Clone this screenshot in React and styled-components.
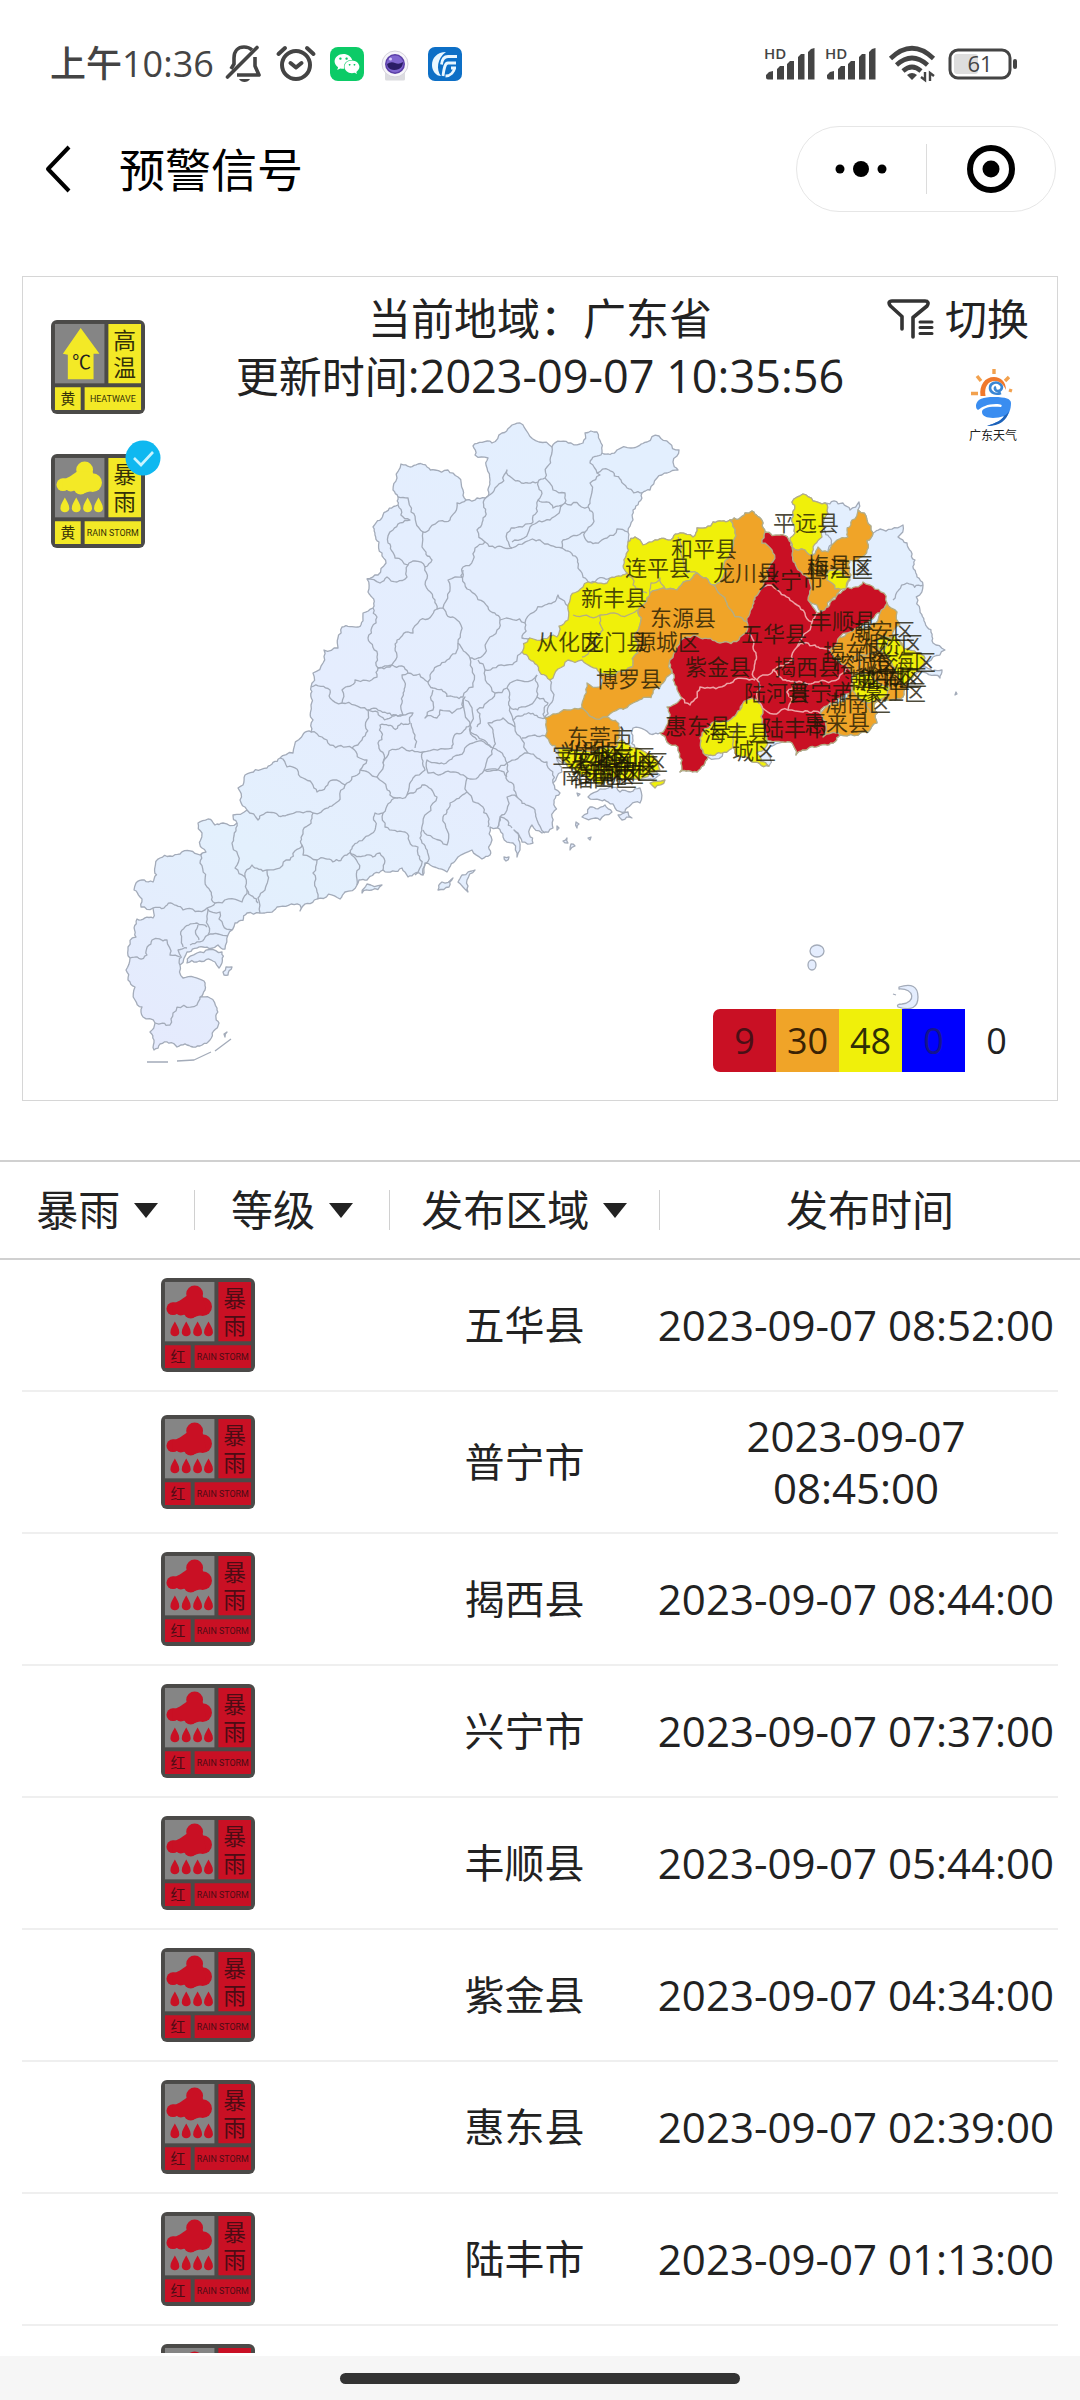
import React from "react";
import styled, { createGlobalStyle } from "styled-components";
import { FaWeixin } from "react-icons/fa";

const GlobalStyle = createGlobalStyle`
  * {
    box-sizing: border-box;
  }

  body {
    margin: 0;
    background: #fff;
    color: #222;
    font-family: "Open Sans", "Noto Sans CJK SC", sans-serif;
  }
`;

const RED = "#c91024";
const ORANGE = "#f0a428";
const YELLOW = "#f0f00a";
const SIGN_YELLOW = "#f3e926";

/* ---------- layout ---------- */

const Page = styled.div`
  display: flex;
  flex-direction: column;
  height: 100vh;
  overflow: hidden;
`;

const StatusBar = styled.header`
  display: flex;
  align-items: center;
  justify-content: space-between;
  flex: none;
  height: 86px;
  padding: 42px 62px 0 50px;
  color: #444;
`;

const StatusGroup = styled.div`
  display: flex;
  align-items: center;
  gap: ${props => props.$gap}px;

  svg {
    display: block;
    overflow: visible;
  }
`;

const Clock = styled.span`
  font-size: 36px;
  font-weight: 500;
  line-height: 44px;
`;

const WechatTile = styled.span`
  display: flex;
  align-items: center;
  justify-content: center;
  width: 34px;
  height: 34px;
  border-radius: 8px;
  background: #0ccb67;
  color: #fff;
  font-size: 26px;
`;

const NavBar = styled.nav`
  display: flex;
  align-items: center;
  flex: none;
  height: 166px;
  padding: 0 24px 0 34px;
  color: #000;

  h1 {
    flex: 1;
    margin: 0 0 0 37px;
    font-size: 46px;
    font-weight: 400;
    line-height: 60px;
  }
`;

const PlainButton = styled.button`
  display: flex;
  align-items: center;
  justify-content: center;
  padding: 0;
  border: 0;
  background: none;
  color: inherit;
  font: inherit;
`;

const BackButton = styled(PlainButton)`
  width: 48px;
  height: 60px;
`;

const Capsule = styled.div`
  display: flex;
  align-items: center;
  width: 260px;
  height: 86px;
  border: 1px solid #e6e6e6;
  border-radius: 43px;

  button {
    flex: 1;
    height: 50px;
  }

  button + button {
    border-left: 1px solid #dcdcdc;
  }
`;

const MapCard = styled.section`
  display: grid;
  flex: none;
  margin: 24px 22px 59px;
  border: 1px solid #d6d6d6;

  > * {
    grid-area: 1 / 1;
  }
`;

const MapSvg = styled.svg`
  display: block;
  width: 100%;

  text {
    fill: #1c1804;
    fill-opacity: 0.78;
    font-size: 22px;
    text-anchor: middle;
  }
`;

const MapOverlay = styled.div`
  display: flex;
  flex-direction: column;
  justify-content: space-between;
  z-index: 1;
`;

const MapTop = styled.div`
  display: grid;
  grid-template-columns: 1fr auto 1fr;
`;

const SignList = styled.div`
  display: flex;
  flex-direction: column;
  align-items: flex-start;
  gap: 40px;
  padding: 43px 0 0 28px;
`;

const SignButton = styled(PlainButton)`
  position: relative;
`;

const Tick = styled.svg`
  position: absolute;
  top: -14px;
  right: -16px;
`;

const MapTitle = styled.div`
  padding-top: 13px;
  font-size: 43px;
  line-height: 57px;
  text-align: center;

  p {
    margin: 0;
  }

  time {
    font-size: 45px;
  }
`;

const MapTools = styled.div`
  display: flex;
  flex-direction: column;
  align-items: flex-end;
  padding: 13px 28px 0 0;
`;

const SwitchButton = styled(PlainButton)`
  gap: 11px;
  font-size: 42px;
  line-height: 57px;
`;

const Brand = styled.div`
  display: flex;
  flex-direction: column;
  align-items: center;
  margin: 22px 12px 0 0;
  font-size: 12px;
  line-height: 18px;
`;

const Legend = styled.ul`
  display: flex;
  align-self: flex-end;
  margin: 0 29px 28px 0;
  padding: 0;
  list-style: none;
  font-size: 36px;
  line-height: 63px;
  text-align: center;
`;

const LegendCell = styled.li`
  width: 63px;
  background: ${props => props.$color};
  color: ${props => props.$ink || "#222"};

  &:first-child {
    border-radius: 7px 0 0 7px;
  }
`;

const FilterBar = styled.div`
  display: grid;
  grid-template-columns: 18fr 18fr 25fr 39fr;
  align-items: center;
  flex: none;
  height: 100px;
  border-top: 2px solid #d0d0d0;
  border-bottom: 2px solid #d0d0d0;
  font-size: 42px;
`;

const FilterCell = styled.div`
  display: flex;
  align-items: center;
  justify-content: center;
  gap: 13px;
  height: 40px;
  line-height: 60px;

  & + & {
    border-left: 1px solid #d0d0d0;
  }
`;

const FilterSelect = styled.select`
  appearance: none;
  margin: 0;
  padding: 0;
  border: 0;
  background: none;
  color: inherit;
  font: inherit;
`;

const List = styled.main`
  flex: 1;
  min-height: 0;
  overflow: hidden;
  padding: 0 22px;
`;

const WarningTable = styled.table`
  width: 100%;
  table-layout: fixed;
  border-collapse: collapse;
  font-size: 40px;
  line-height: 52px;
  text-align: center;

  td {
    padding: 18px 0;
    border-bottom: 2px solid #efefef;
    white-space: nowrap;
  }

  svg {
    display: block;
    margin: 0 auto;
  }
`;

const Col = styled.col`
  width: ${props => props.$width};
`;

const IssueTime = styled.time`
  display: block;
  font-size: 42px;

  span {
    display: ${props => (props.$stacked ? "block" : "inline")};
  }
`;

const HomeBar = styled.footer`
  display: flex;
  justify-content: center;
  flex: none;
  height: 47px;
  padding-top: 17px;
  border-top: 3px solid #fff;
  background: #f6f6f6;

  span {
    width: 37%;
    height: 11px;
    border-radius: 6px;
    background: #333;
  }
`;

/* ---------- icons ---------- */

const MuteIcon = () => (
  <svg width="36" height="38" viewBox="0 0 36 38" fill="none" stroke="currentColor" strokeWidth="3.6">
    <path d="M5 24 8 19V13C8 6 12 2 18 2c3 0 6 1 8 3" />
    <path d="M29 12v9l4 9H11" strokeLinejoin="round" />
    <path d="M1.500 32 31 2.500" strokeLinecap="round" />
    <path d="M13 34h11c-2 4-9 4-11 0z" fill="currentColor" stroke="none" />
  </svg>
);

const AlarmIcon = () => (
  <svg width="40" height="38" viewBox="0 0 40 38" fill="none" stroke="currentColor" strokeWidth="4" strokeLinecap="round">
    <circle cx="20" cy="20" r="14" />
    <path d="M2.500 9 9 3M31 3l6.500 6M14.500 18l5.500 4.500 5.500-4.500" strokeLinejoin="round" />
  </svg>
);

const CameraIcon = () => (
  <svg width="34" height="34" viewBox="0 0 34 34">
    <path d="M7 22h20v10a1.500 1.500 0 0 1-1.500 1.500h-17A1.500 1.500 0 0 1 7 32z" fill="#dcdce0" />
    <circle cx="17" cy="17" r="13" fill="#f6f5f9" stroke="#d6d3dc" />
    <circle cx="17" cy="17" r="10" fill="#5a3ea6" />
    <circle cx="17" cy="17" r="8.500" fill="#8066cf" />
    <path d="M9 17q4-3 8-1t8-1q0 5-4 7-5 2-9 0-3-2-3-5z" fill="#2b1d66" />
    <circle cx="12.500" cy="12" r="1.500" fill="#d9ccff" />
  </svg>
);

const BankIcon = () => (
  <svg width="34" height="34" viewBox="0 0 34 34">
    <rect width="34" height="34" rx="7" fill="#0d6fc6" />
    <g fill="none" stroke="#e9f7ff">
      <path d="M18 5C9 5 4 11 4 18c0 6 4 11 9 11-5-6-4-18 5-24z" fill="#e9f7ff" stroke="none" />
      <path d="M29 9.500H20c-4 0-6 3-6.500 8M28 16h-8c-3 0-4 5-5 13M23 21h5M26.500 20c0 5-4 9-9 9" strokeWidth="2.800" />
    </g>
  </svg>
);

const SignalIcon = () => (
  <svg width="51" height="34" viewBox="0 0 51 34" fill="currentColor">
    <text x="0" y="12" fontSize="15" fontWeight="600">HD</text>
    <path d="M2 28l3-3 4-1v8.500H4a2 2 0 0 1-2-2zM13 22l3-3h4v13.500h-7zM23 17l3-3h4v18.500h-7zM34 10l3-3h3.500v25.500H34zM44 5l3-3 3.500-1v31.500H44z" />
  </svg>
);

const WifiIcon = () => (
  <svg width="46" height="36" viewBox="0 0 46 36" fill="none" stroke="currentColor" strokeWidth="4.600">
    <path d="M1.500 12.500Q23-8 44.500 12.500M7.500 19Q23 5 38.500 19M14 25Q23 17 32 25" />
    <path d="M18 29q5-4 10 0l-5 5z" fill="currentColor" stroke="none" />
    <path d="M36 26v8l-4-3M41 35v-8l4 3" strokeWidth="2.400" />
  </svg>
);

const BatteryIcon = () => (
  <svg width="70" height="32" viewBox="0 0 70 32">
    <rect x="6" y="6" width="24" height="20" rx="3" fill="#dedede" />
    <rect x="2" y="2" width="60" height="28" rx="8" fill="none" stroke="currentColor" strokeWidth="3" />
    <rect x="65" y="11" width="4" height="10" rx="2" fill="currentColor" />
    <text x="32" y="24" fontSize="22" fontWeight="500" textAnchor="middle" fill="currentColor">61</text>
  </svg>
);

const FilterIcon = () => (
  <svg width="47" height="40" viewBox="0 0 47 40" fill="none" stroke="#333" strokeWidth="3.600" strokeLinecap="round" strokeLinejoin="round">
    <path d="M15 30V17.500L3.500 7C1 4 2 2 5 2h33c3 0 4 2 2 5L26 18.500V38" />
    <path d="M33 23h12M33 28.500h12M33 34.500h12" strokeWidth="3" />
  </svg>
);

const Caret = () => (
  <svg width="24" height="15" viewBox="0 0 24 15" aria-hidden="true">
    <path d="M0 0h24L12 15z" fill="#222" />
  </svg>
);

const BrandLogo = () => (
  <svg width="44" height="58" viewBox="0 0 44 58" fill="none">
    <path d="M9.500 27C8 16 14 8 23 8c7 0 12 5 12 13-2-5-6-9-11-9-7 0-11 6-9.500 15z" fill="#f0792c" />
    <path d="M0 24.500h7M6 7l4 5M23 0v5M38 8l-4 4M38 21l3 1" stroke="#f2a14e" strokeWidth="3.400" />
    <path d="M30 24c-5 2-11 0-11-5s6-7 10-4 1 7-2 7-4-3-2-4" stroke="#3a86d4" strokeWidth="2.600" />
    <path d="M5 36c1-6 7-8 18-8 12 0 17 2 17 6 0 12-8 22-24 23 9-3 15-6 17-10-8 3-22 3-22-4 0-4 7-6 19-5 2-2 0-3-5-3-9 0-14 3-18 6-2-1-2-3-2-5z" fill="#3a8df0" />
    <path d="M16 57c9-3 15-6 17-10 2-1 4-3 5-5-2 9-9 15-22 15z" fill="#1e62b8" />
  </svg>
);

const StormPicture = ({ color }) => (
  <g fill={color}>
    <circle cx="34" cy="16" r="8.500" />
    <circle cx="12" cy="31" r="6.500" />
    <circle cx="20" cy="32" r="6" />
    <circle cx="30" cy="34" r="7" />
    <circle cx="42" cy="29" r="9.500" />
    <path d="M12 25c5 0 8-3 14-7h16l4 18-14 4-12-4-8 1z" />
    {[14, 25.5, 37, 48].map(x => (
      <path key={x} d={`M${x} 44c2 4 4.500 7 4.500 11 0 5-9 5-9 0 0-4 2.500-7 4.500-11z`} />
    ))}
  </g>
);

const HeatPicture = ({ color }) => (
  <g>
    <path d="M30 8 49 34h-6v26H17V35l-5-1z" fill={color} />
    <text x="31" y="50" fontSize="19" textAnchor="middle" fill="#222">℃</text>
  </g>
);

const WarningSign = ({ kind, color, level, ink, english }) => (
  <svg width="94" height="94" viewBox="0 0 95 95" role="img" aria-label={`${kind}${level}`}>
    <rect width="95" height="95" rx="6" fill="#4b4a48" />
    <rect x="4" y="4" width="50" height="60" fill="#858585" />
    <path d="M58 4h33v60H58zM4 68h26v23H4zM34 68h57v23H34z" fill={color} />
    {kind === "高温" ? <HeatPicture color={color} /> : <StormPicture color={color} />}
    <g fill={ink} textAnchor="middle" fontSize="23">
      <text x="74.500" y="29">{kind[0]}</text>
      <text x="74.500" y="57">{kind[1]}</text>
      <text x="17" y="85" fontSize="15">{level}</text>
      <text x="62.500" y="83" fontSize="9" fontFamily="Roboto, sans-serif">
        {english}
      </text>
    </g>
  </svg>
);

/* ---------- map ---------- */

const OUTLINE =
  "520,423 510,427 502,433 492,443 473,446 475,455 488,458 487,468 490,480 488,496 477,498 466,500 463,490 458,477 448,470 435,470 427,467 418,464 410,467 401,464 397,478 393,490 398,497 398,505 383,515 373,527 375,535 379,542 382,553 386,563 378,575 367,579 368,592 373,608 363,613 358,627 342,627 338,638 338,648 324,650 323,663 313,673 311,687 311,705 313,720 311,732 293,753 280,758 267,768 245,775 243,785 238,788 240,800 247,810 233,815 237,823 223,823 215,825 208,819 198,823 202,833 202,848 206,852 200,855 180,854 160,858 155,867 153,882 136,883 134,890 140,897 141,907 153,908 153,918 137,919 136,937 128,947 130,958 126,970 128,980 135,987 135,1000 142,1007 143,1017 155,1023 150,1032 154,1040 154,1050 160,1044 177,1047 193,1047 210,1040 219,1023 217,1008 210,998 200,997 205,990 204,981 183,978 180,965 187,952 203,947 218,945 225,949 228,935 235,923 247,913 260,913 277,907 300,905 300,911 317,899 340,899 345,892 357,885 359,880 367,880 383,870 402,868 408,877 423,875 425,863 447,872 458,857 472,850 482,859 490,855 492,840 490,827 497,828 500,817 503,837 513,843 517,857 520,850 514,830 518,833 522,842 533,843 532,825 542,833 553,828 552,817 554,800 560,793 553,783 562,772 557,757 565,762 580,775 600,785 640,780 660,775 655,758 635,748 633,728 645,730 660,733 667,742 678,747 682,760 680,772 697,772 708,757 733,747 750,760 769,766 767,750 783,742 792,743 796,755 810,747 827,745 840,735 868,732 877,723 875,703 887,700 903,697 907,677 917,673 940,678 942,670 923,667 933,657 945,650 933,643 927,627 920,610 923,585 917,577 915,560 907,543 898,537 903,525 880,529 873,533 867,520 858,510 859,502 850,510 843,503 825,503 803,494 792,502 793,517 795,533 792,547 780,535 765,532 763,523 752,511 745,513 730,520 713,522 697,528 693,537 680,533 673,538 655,540 643,545 635,537 628,542 628,532 633,520 633,510 642,493 650,490 657,478 678,470 673,462 679,450 669,443 659,436 647,442 631,448 617,450 602,453 601,443 597,432 585,433 583,443 571,443 552,447 539,442 528,433";

const BORDERS = [
  "488,496 495,488 507,470 512,478 528,483 538,482 545,478 547,467 552,447",
  "602,453 590,463 597,473 609,470 621,480 627,488 642,493",
  "597,473 600,475 590,483 592,492 588,507 565,503 565,493 553,490 545,478",
  "538,482 538,500 533,522 518,527 507,533 507,540 512,548 540,540 562,548 563,540 585,532 593,513 588,507",
  "538,500 553,508 565,503 550,520 530,527 512,542",
  "585,532 588,542 607,538 617,529 628,532",
  "562,548 577,558 582,573 595,582 610,578",
  "398,497 408,498 411,512 423,532 450,520 457,503 466,500",
  "398,505 410,520 393,530 388,543 395,558 408,565 415,561 425,567 432,560 422,547 423,532",
  "408,565 407,577 397,582 387,577 380,583 367,579",
  "425,567 428,590 435,600 437,609 420,620 413,633 397,640 397,657 390,667 378,668 377,657 368,638 377,617 373,608",
  "437,609 443,608 448,580 463,577 463,567 473,560 475,548 485,542 477,530 488,496",
  "485,542 495,548 512,548",
  "463,570 470,590 488,607 500,620 525,623 545,605 558,595 573,613",
  "525,623 522,638 530,638",
  "443,608 457,620 458,643 470,658 478,658 488,640 497,630 500,620",
  "458,643 447,660 430,675 428,682 433,688 463,697 473,687 470,658",
  "378,668 392,665 408,673 428,682",
  "378,668 377,677 355,680 342,690 342,703 367,710 403,715 402,703 405,687 402,675 408,673",
  "311,687 330,690 330,698 342,703",
  "478,660 485,670 487,683 495,693 507,688 510,683 537,675",
  "485,670 507,665 522,652",
  "368,710 367,720 362,740 352,748 330,745 322,737 311,732",
  "352,748 367,760 360,770 345,785 333,780 317,792 303,778 287,767 280,758",
  "345,785 340,797 313,813 287,815 258,820 247,810",
  "313,813 303,830 302,845 290,860 267,870 252,865 245,877 235,868 232,843 237,823",
  "302,845 303,855 317,860 347,855 357,843 375,830 375,813 383,813 397,798 377,777 360,770",
  "317,860 313,873 318,898",
  "350,852 358,863 357,885",
  "350,852 380,853 383,870",
  "383,813 385,827 405,832 418,847 415,875",
  "397,798 407,795 422,785 437,797 423,823 422,843 423,875",
  "267,870 265,890 258,898 260,913",
  "245,877 247,890 242,902 215,903 207,887 200,863 202,853",
  "247,890 258,903",
  "153,908 183,910 207,908 215,903",
  "207,908 220,912 223,925 232,930",
  "208,910 208,935 190,945",
  "208,935 228,936",
  "198,925 199,940",
  "130,958 147,955 152,940 167,940 170,955 180,957",
  "183,947 182,930 197,923 207,927",
  "180,965 178,950 187,948",
  "155,1023 170,1025 173,1013 197,1005 200,997",
  "368,710 403,715 413,713 410,723 380,725 378,743 383,763 377,777",
  "383,763 402,747 423,752 425,770 413,778 407,795",
  "411,723 415,748",
  "423,752 470,725 465,700",
  "470,725 493,748 493,730 488,723 503,718 515,727 522,740 528,753 507,763 493,748",
  "528,753 547,762 553,783",
  "522,738 535,735 552,743",
  "515,727 513,720 545,718",
  "507,763 507,780 517,797 537,820 545,833",
  "517,797 507,797 507,810 500,817",
  "507,777 467,778 467,792 483,807 488,827",
  "467,778 428,773 427,760 437,763 453,757 473,743 493,748 484,770 507,763",
  "467,792 450,803 443,817 447,845 433,838 423,830",
  "477,727 477,710 495,693",
  "507,688 510,707 513,720",
  "510,707 537,697 548,703 545,718",
  "537,675 537,697",
  "433,690 433,710 425,718 437,718 440,710 463,707 465,697 477,740",
  "500,817 512,828",
  "550,680 553,700 545,718",
  "923,585 907,583 893,600",
  "825,503 823,523 828,552",
  "867,550 873,533"
];

const ISLANDS = [
  "187,963 197,953 222,952 219,968 215,962 197,962",
  "223,972 226,967 232,967 228,975 224,975",
  "362,893 367,884 382,885 372,890",
  "438,890 442,882 453,878 449,887",
  "458,882 462,875 475,870 467,880 468,892 463,887",
  "588,797 600,789 620,792 640,788 640,803 625,812 615,808 600,800",
  "582,817 590,807 605,805 612,812 600,820",
  "618,815 628,812 632,818 622,820",
  "576,822 579,824 577,828",
  "563,841 567,838 568,843",
  "571,844 575,846 570,850",
  "504,857 509,857 506,861",
  "577,793 580,794 578,796",
  "557,826 559,828 557,830",
  "588,838 591,837 590,840",
  "956,692 957,694 955,695",
  "224,1034 227,1032 225,1037"
];

const AREAS = [
  {
    fill: YELLOW,
    shapes: [
      "522,652 530,638 557,637 568,620 568,605 583,587 595,582 607,583 610,578 627,573 625,558 628,542 635,537 643,545 655,540 673,538 680,533 693,537 697,528 713,522 730,520 735,533 730,553 713,585 697,573 677,590 663,588 650,593 638,613 635,633 638,653 632,667 600,673 582,660 568,660 550,680 537,665",
      "740,710 752,698 763,710 762,723 767,740 757,753 769,766 750,760 733,747 703,753 702,733 733,717",
      "792,502 803,494 825,503 823,523 822,537 813,555 805,550 792,547 790,538 795,533 793,517",
      "557,747 600,738 623,740 635,748 655,758 660,770 640,780 600,785 580,775 565,762",
      "650,783 665,780 655,788"
    ]
  },
  {
    fill: ORANGE,
    shapes: [
      "650,593 663,588 677,590 697,573 713,585 727,603 748,625 740,637 720,643 687,637 677,647 670,660 672,673 663,683 633,703 607,717 582,708 587,683 600,687 600,673 632,667 638,653 635,633 638,613",
      "730,520 745,513 752,511 763,523 765,532 762,543 772,550 767,570 763,587 755,597 748,625 727,603 713,585 730,553 735,533",
      "545,718 567,710 582,708 607,717 620,728 617,747 557,750",
      "792,547 805,550 813,555 818,547 828,552 837,540 848,537 852,520 858,510 867,520 873,533 867,550 850,560 850,580 837,597 823,613 808,600 807,577 795,563",
      "880,613 887,603 897,612 900,625 893,637 905,650 900,665 907,677 903,697 887,700 875,703 877,723 868,732 840,735 823,737 820,713 850,693 850,670 830,650 847,633"
    ]
  },
  {
    fill: YELLOW,
    shapes: [
      "827,580 830,570 850,577 847,590",
      "877,640 895,635 910,650 925,658 915,673 905,685 895,670 885,655",
      "850,680 870,672 890,688 880,700 856,697"
    ]
  },
  {
    fill: RED,
    shapes: [
      "765,532 780,535 792,547 795,563 807,577 808,600 817,613 830,603 847,587 863,582 870,585 887,603 880,613 867,623 847,633 837,643 830,650 840,663 850,670 850,693 830,703 820,713 823,737 840,735 827,745 810,747 796,755 792,743 783,742 767,740 762,723 763,710 752,698 747,700 740,710 733,717 702,733 703,753 708,757 697,772 680,772 682,760 678,747 667,742 660,733 668,723 667,707 682,698 673,680 672,670 670,660 677,647 687,637 700,638 720,643 740,637 748,625 750,613 755,597 763,587 767,570 772,550 762,543"
    ]
  }
];

const AREA_LINES = [
  "573,615 600,615 628,615 637,610",
  "600,615 603,630 595,647 582,657",
  "627,573 633,585 647,593",
  "650,593 651,583 660,578 665,588",
  "678,537 682,557 687,573 697,573",
  "740,725 733,747",
  "893,637 880,650 866,655 858,670",
  "866,655 850,660",
  "858,700 870,712 877,712"
];

const RED_LINES = [
  "682,698 690,705 700,687 710,688 733,682 755,680",
  "748,633 753,647 755,663 757,680",
  "763,587 768,585 780,592 797,605 812,622 817,613",
  "812,622 797,647 793,660 773,670 757,680",
  "797,647 815,645 830,650",
  "773,670 783,680 815,682 840,675 846,668",
  "757,680 758,700 765,710 788,710 792,700 787,692 795,684",
  "788,710 803,712 820,713"
];

const LABELS = [
  ["和平县", 704, 549], ["连平县", 658, 568], ["新丰县", 614, 598], ["龙川县", 746, 573],
  ["东源县", 683, 618], ["从化区", 569, 642], ["龙门县", 615, 642], ["源城区", 667, 642],
  ["紫金县", 718, 667], ["博罗县", 629, 679], ["惠东县", 698, 726], ["海丰县", 737, 733],
  ["城区", 754, 751], ["东莞市", 600, 737], ["平远县", 806, 523], ["梅县区", 840, 565],
  ["梅江区", 840, 569], ["兴宁市", 791, 580], ["五华县", 774, 634], ["丰顺县", 843, 621],
  ["潮安区", 882, 631], ["湘桥区", 890, 644], ["揭东区", 856, 652], ["榕城区", 866, 664],
  ["澄海区", 903, 662], ["揭西县", 807, 667], ["潮阳区", 877, 680], ["普宁市", 821, 692],
  ["陆河县", 777, 693], ["濠江区", 893, 692], ["龙湖区", 894, 677], ["金平区", 887, 678],
  ["潮南区", 858, 703], ["惠来县", 837, 723], ["陆丰市", 795, 728],
  ["宝安区", 585, 755], ["光明区", 594, 751], ["龙华区", 601, 758], ["龙岗区", 622, 757],
  ["坪山区", 635, 762], ["盐田区", 625, 771], ["大鹏新区", 615, 765], ["南山区", 594, 775],
  ["福田区", 604, 778], ["罗湖区", 611, 774]
];

// Breaks a straight border into a wavy one. The offset depends only on the
// midpoint, so two areas that share an edge stay glued together.
const roughen = (a, b) => {
  const [dx, dy] = a[0] < b[0] || (a[0] === b[0] && a[1] < b[1])
    ? [b[0] - a[0], b[1] - a[1]]
    : [a[0] - b[0], a[1] - b[1]];
  if (Math.hypot(dx, dy) < 4) return [b];
  const mx = (a[0] + b[0]) / 2;
  const my = (a[1] + b[1]) / 2;
  const wave = Math.sin(mx * 12.9898 + my * 78.233) * 43758.5453;
  const shift = (wave - Math.floor(wave) - 0.5) * 0.42;
  const mid = [mx - dy * shift, my + dx * shift];
  return [...roughen(a, mid), ...roughen(mid, b)];
};

const toPath = (text, closed) => {
  const points = text.split(" ").map(pair => pair.split(",").map(Number));
  if (closed) points.push(points[0]);
  const line = points.slice(1).flatMap((point, i) => roughen(points[i], point));
  const all = [points[0], ...line].map(([x, y]) => `${x.toFixed(1)} ${y.toFixed(1)}`);
  return `M${all.join("L")}${closed ? "Z" : ""}`;
};

const ProvinceMap = () => (
  <MapSvg viewBox="23 277 1034 823" role="img" aria-label="广东省预警地图" strokeLinejoin="round">
    <defs>
      <linearGradient id="land" gradientUnits="userSpaceOnUse" x1="130" y1="1040" x2="560" y2="430">
        <stop offset="0" stopColor="#e5eafd" />
        <stop offset="0.3" stopColor="#e3f0fd" />
        <stop offset="0.55" stopColor="#e5edfe" />
        <stop offset="1" stopColor="#e3effe" />
      </linearGradient>
    </defs>
    <g fill="url(#land)" stroke="#a3abb9" strokeWidth="1.3">
      <path d={toPath(OUTLINE, true)} />
      {BORDERS.map(line => <path key={line} d={toPath(line)} fill="none" />)}
      {ISLANDS.map(line => <path key={line} d={toPath(line, true)} />)}
      <ellipse cx="817" cy="951" rx="7" ry="6" />
      <ellipse cx="812" cy="965" rx="4" ry="5" />
      <path d="M899 987q19-6 19 10t-20 10q-2-3 4-3c14-1 13-16-3-15z" />
      <path d="M893 994l3 1M147 1062h21M177 1061l17-1 17-8M215 1051l16-12" fill="none" />
    </g>
    {AREAS.map((area, i) => (
      <g key={i} fill={area.fill} stroke="#b4ad83" strokeWidth="1.3">
        {area.shapes.map(shape => <path key={shape} d={toPath(shape, true)} />)}
      </g>
    ))}
    <g fill="none" stroke="#b4ad83" strokeWidth="1.3">
      {AREA_LINES.map(line => <path key={line} d={toPath(line)} />)}
    </g>
    <g fill="none" stroke="#eda3a6" strokeWidth="1.5">
      {RED_LINES.map(line => <path key={line} d={toPath(line)} />)}
    </g>
    {LABELS.map(([name, x, y]) => (
      <text key={name} x={x} y={y + 8}>{name}</text>
    ))}
  </MapSvg>
);

/* ---------- page ---------- */

const counts = [
  { color: RED, ink: "#4a0f16", value: 9 },
  { color: ORANGE, ink: "#3a2204", value: 30 },
  { color: YELLOW, ink: "#2f2f06", value: 48 },
  { color: "#0000fe", ink: "#15158c", value: 0 },
  { color: "#fff", value: 0 }
];

const filters = [
  { name: "预警类型", value: "暴雨" },
  { name: "预警等级", value: "等级" },
  { name: "区域", value: "发布区域" }
];

const warnings = [
  { area: "五华县", time: "08:52:00" },
  { area: "普宁市", time: "08:45:00", stacked: true },
  { area: "揭西县", time: "08:44:00" },
  { area: "兴宁市", time: "07:37:00" },
  { area: "丰顺县", time: "05:44:00" },
  { area: "紫金县", time: "04:34:00" },
  { area: "惠东县", time: "02:39:00" },
  { area: "陆丰市", time: "01:13:00" },
  { area: "", time: "" }
];

const WarningRow = ({ area, time, stacked }) => (
  <tr>
    <td>
      <WarningSign kind="暴雨" level="红" english="RAIN STORM" color={RED} ink="#4c0c14" />
    </td>
    <td>{area}</td>
    <td>
      {time && (
        <IssueTime $stacked={stacked}>
          <span>2023-09-07</span> <span>{time}</span>
        </IssueTime>
      )}
    </td>
  </tr>
);

const App = () => (
  <Page>
    <GlobalStyle />
    <StatusBar>
      <StatusGroup $gap={14}>
        <StatusGroup $gap={12}>
          <Clock>上午10:36</Clock>
          <MuteIcon />
        </StatusGroup>
        <AlarmIcon />
        <WechatTile>
          <FaWeixin />
        </WechatTile>
        <StatusGroup $gap={16}>
          <CameraIcon />
          <BankIcon />
        </StatusGroup>
      </StatusGroup>
      <StatusGroup $gap={13}>
        <StatusGroup $gap={10}>
          <SignalIcon />
          <SignalIcon />
        </StatusGroup>
        <WifiIcon />
        <BatteryIcon />
      </StatusGroup>
    </StatusBar>

    <NavBar>
      <BackButton aria-label="返回">
        <svg width="26" height="48" viewBox="0 0 26 48" fill="none" stroke="#000" strokeWidth="4">
          <path d="M24 2 3 24l21 22" strokeLinejoin="round" />
        </svg>
      </BackButton>
      <h1>预警信号</h1>
      <Capsule>
        <PlainButton aria-label="更多">
          <svg width="52" height="18" viewBox="0 0 52 18">
            <circle cx="5" cy="9" r="4.500" />
            <circle cx="26" cy="9" r="8" />
            <circle cx="47" cy="9" r="4.500" />
          </svg>
        </PlainButton>
        <PlainButton aria-label="关闭">
          <svg width="48" height="48" viewBox="0 0 48 48">
            <circle cx="24" cy="24" r="21" fill="none" stroke="#000" strokeWidth="6" />
            <circle cx="24" cy="24" r="8.500" />
          </svg>
        </PlainButton>
      </Capsule>
    </NavBar>

    <MapCard>
      <ProvinceMap />
      <MapOverlay>
        <MapTop>
          <SignList>
            <SignButton>
              <WarningSign kind="高温" level="黄" english="HEATWAVE" color={SIGN_YELLOW} ink="#333008" />
            </SignButton>
            <SignButton>
              <WarningSign kind="暴雨" level="黄" english="RAIN STORM" color={SIGN_YELLOW} ink="#333008" />
              <Tick width="36" height="36" viewBox="0 0 36 36" fill="none">
                <circle cx="18" cy="18" r="17.500" fill="#0fb8f0" />
                <path d="M9 18l7 7 12-13" stroke="#c9f4ff" strokeWidth="2.600" />
              </Tick>
            </SignButton>
          </SignList>
          <MapTitle>
            <p>当前地域：广东省</p>
            <p>
              更新时间<time>:2023-09-07 10:35:56</time>
            </p>
          </MapTitle>
          <MapTools>
            <SwitchButton>
              <FilterIcon />
              切换
            </SwitchButton>
            <Brand>
              <BrandLogo />
              广东天气
            </Brand>
          </MapTools>
        </MapTop>
        <Legend>
          {counts.map(count => (
            <LegendCell key={count.color} $color={count.color} $ink={count.ink}>
              {count.value}
            </LegendCell>
          ))}
        </Legend>
      </MapOverlay>
    </MapCard>

    <FilterBar>
      {filters.map(filter => (
        <FilterCell key={filter.name}>
          <FilterSelect aria-label={filter.name}>
            <option>{filter.value}</option>
          </FilterSelect>
          <Caret />
        </FilterCell>
      ))}
      <FilterCell>发布时间</FilterCell>
    </FilterBar>

    <List>
      <WarningTable aria-label="预警信号列表">
        <colgroup>
          <Col $width="36%" />
          <Col $width="25%" />
          <Col $width="39%" />
        </colgroup>
        <tbody>
          {warnings.map((warning, i) => (
            <WarningRow key={i} {...warning} />
          ))}
        </tbody>
      </WarningTable>
    </List>

    <HomeBar>
      <span />
    </HomeBar>
  </Page>
);

export default App;
